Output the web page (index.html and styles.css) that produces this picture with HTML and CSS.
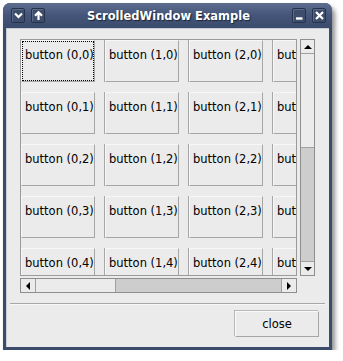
FILE: index.html
```html
<!DOCTYPE html>
<html lang="en">
  <head>
    <meta charset="UTF-8" />
    <title>ScrolledWindow Example</title>
    <link rel="stylesheet" href="styles.css">
  </head>
  <body>
    <div class="window">
      <div class="titlebar">
        <div class="tb-left">
          <span class="tbtn">
            <svg width="9" height="7" viewBox="0 0 9 7"><path d="M1 1.5 L4.5 5 L8 1.5" fill="none" stroke="#fff" stroke-width="2.2"/></svg>
          </span>
          <span class="tbtn">
            <svg width="9" height="9" viewBox="0 0 9 9"><path d="M4.5 9 V2 M1 4.8 L4.5 1.2 L8 4.8" fill="none" stroke="#fff" stroke-width="2.2"/></svg>
          </span>
        </div>
        <div class="title">ScrolledWindow Example</div>
        <div class="tb-right">
          <span class="tbtn">
            <svg width="9" height="9" viewBox="0 0 9 9"><path d="M1 7.5 H7.5" fill="none" stroke="#fff" stroke-width="2.4"/></svg>
          </span>
          <span class="tbtn">
            <svg width="9" height="9" viewBox="0 0 9 9"><path d="M1 1 L8 8 M8 1 L1 8" fill="none" stroke="#fff" stroke-width="2.2"/></svg>
          </span>
        </div>
      </div>
      <div class="client">
        <div class="scrolled">
          <div class="viewport">
            <div class="table">
              <div class="btn focus">button (0,0)</div>
              <div class="btn">button (1,0)</div>
              <div class="btn">button (2,0)</div>
              <div class="btn">button (3,0)</div>
              <div class="btn">button (0,1)</div>
              <div class="btn">button (1,1)</div>
              <div class="btn">button (2,1)</div>
              <div class="btn">button (3,1)</div>
              <div class="btn">button (0,2)</div>
              <div class="btn">button (1,2)</div>
              <div class="btn">button (2,2)</div>
              <div class="btn">button (3,2)</div>
              <div class="btn">button (0,3)</div>
              <div class="btn">button (1,3)</div>
              <div class="btn">button (2,3)</div>
              <div class="btn">button (3,3)</div>
              <div class="btn">button (0,4)</div>
              <div class="btn">button (1,4)</div>
              <div class="btn">button (2,4)</div>
              <div class="btn">button (3,4)</div>
            </div>
          </div>
          <div class="vscroll">
            <div class="arrow-box"><span class="tri up"></span></div>
            <div class="trough"></div>
            <div class="thumb"></div>
            <div class="arrow-box"><span class="tri down"></span></div>
          </div>
          <div class="hscroll">
            <div class="arrow-box"><span class="tri left"></span></div>
            <div class="trough"></div>
            <div class="thumb"></div>
            <div class="arrow-box"><span class="tri right"></span></div>
          </div>
        </div>
        <div class="separator"></div>
        <div class="actions">
          <div class="close-btn">close</div>
        </div>
      </div>
    </div>
  </body>
</html>
```

FILE: styles.css
```css
body {
  margin: 0;
  background: #ffffff;
  font-family: "DejaVu Sans", sans-serif;
}

.window {
  margin: 3px 0 0 3px;
  width: 329px;
  height: 347px;
  box-sizing: border-box;
  padding: 0 3px 3px;
  display: flex;
  flex-direction: column;
  background: #3b4b6a;
  border-radius: 7px 7px 0 0;
  box-shadow: 3px 4px 5px rgba(0, 0, 0, 0.45);
}

.titlebar {
  height: 25px;
  flex: none;
  display: flex;
  align-items: center;
  margin: 0 -3px;
  padding: 0 6px 0 5px;
  border-radius: 7px 7px 0 0;
  background: linear-gradient(#5d6d8e, #44557a 50%, #3b4b6b);
}

.tb-left,
.tb-right {
  display: flex;
  gap: 6px;
  width: 60px;
}

.tb-left {
  padding-left: 3px;
}

.tb-right {
  justify-content: flex-end;
}

.tbtn {
  width: 12px;
  height: 13px;
  display: flex;
  align-items: center;
  justify-content: center;
  border: 1px solid #26324a;
  border-radius: 2px;
  background: #3d4d6c;
  box-shadow: inset 1px 1px 0 #5a6a8a;
}

.title {
  flex: 1;
  text-align: center;
  color: #ffffff;
  font-size: 11.5px;
  font-weight: bold;
  text-shadow: 1px 1px 1px #1a2233;
}

.client {
  flex: 1;
  background: #ebebeb;
  box-shadow: inset 1px 1px 0 #c7ccd6;
  padding: 11px 0 0 14px;
  display: flex;
  flex-direction: column;
}

.scrolled {
  display: grid;
  grid-template-columns: 277px 15px;
  grid-template-rows: 237px 15px;
  column-gap: 3px;
  row-gap: 2px;
}

.viewport {
  border: 1px solid #9a9a9a;
  overflow: hidden;
}

.table {
  display: grid;
  grid-template-columns: repeat(4, 74px);
  grid-auto-rows: 42px;
  gap: 10px;
}

.btn {
  box-sizing: border-box;
  border: 1px solid #a6a6a6;
  border-top-color: #f7f7f7;
  border-left-color: #f7f7f7;
  box-shadow: -1px 0 0 #a6a6a6;
  padding: 7px 0 0 3px;
  font-size: 11.5px;
  color: #000000;
  white-space: nowrap;
  overflow: hidden;
}

.focus {
  outline: 1px dotted #000000;
  outline-offset: -2px;
}

.vscroll,
.hscroll {
  display: flex;
  border: 1px solid #8e8e8e;
  background: #ebebeb;
}

.vscroll {
  flex-direction: column;
}

.vscroll .arrow-box {
  height: 13px;
  flex: none;
  display: flex;
  align-items: center;
  justify-content: center;
  border-bottom: 1px solid #a0a0a0;
}

.vscroll .arrow-box:last-child {
  border-bottom: none;
  border-top: 1px solid #a0a0a0;
}

.vscroll .trough {
  height: 93px;
}

.vscroll .thumb {
  flex: 1;
  background: #cdcdcd;
  border-top: 1px solid #a0a0a0;
}

.hscroll .arrow-box {
  width: 14px;
  flex: none;
  display: flex;
  align-items: center;
  justify-content: center;
  border-right: 1px solid #a0a0a0;
}

.hscroll .arrow-box:last-child {
  border-right: none;
  border-left: 1px solid #a0a0a0;
}

.hscroll .trough {
  width: 79px;
}

.hscroll .thumb {
  flex: 1;
  background: #cdcdcd;
  border-left: 1px solid #a0a0a0;
}

.tri {
  width: 0;
  height: 0;
  border: 4px solid transparent;
}

.tri.up {
  border-bottom-color: #000;
  border-top-width: 0;
}

.tri.down {
  border-top-color: #000;
  border-bottom-width: 0;
}

.tri.left {
  border-right-color: #000;
  border-left-width: 0;
}

.tri.right {
  border-left-color: #000;
  border-right-width: 0;
}

.separator {
  margin: 10px 4px 0 -10px;
  height: 1px;
  background: #a8a8a8;
  border-bottom: 1px solid #f7f7f7;
}

.actions {
  display: flex;
  justify-content: flex-end;
  padding: 6px 10px 0 0;
}

.close-btn {
  width: 84px;
  height: 26px;
  box-sizing: border-box;
  display: flex;
  align-items: center;
  justify-content: center;
  font-size: 11.5px;
  border: 1px solid #a6a6a6;
  border-top-color: #f9f9f9;
  border-left-color: #f9f9f9;
  box-shadow: -1px -1px 0 #b8b8b8;
}
```
